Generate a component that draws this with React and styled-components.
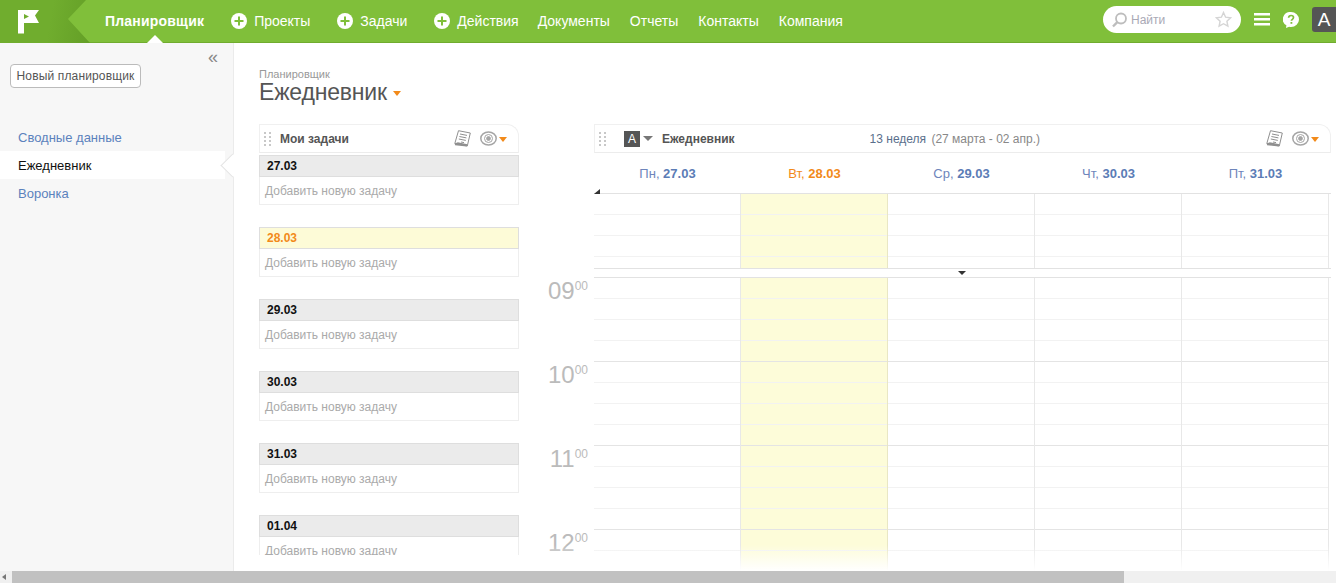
import React from "react";
import styled, { createGlobalStyle } from "styled-components";

const navItems = [
  { label: "Проекты", plus: true, after: 7 },
  { label: "Задачи", plus: true, after: 7 },
  { label: "Действия", plus: true, after: -1 },
  { label: "Документы" },
  { label: "Отчеты" },
  { label: "Контакты" },
  { label: "Компания" },
];

const sideItems = [
  { label: "Сводные данные" },
  { label: "Ежедневник", active: true },
  { label: "Воронка" },
];

const taskDays = [
  { date: "27.03" },
  { date: "28.03", today: true },
  { date: "29.03" },
  { date: "30.03" },
  { date: "31.03" },
  { date: "01.04" },
];

const weekDays = [
  { name: "Пн", date: "27.03" },
  { name: "Вт", date: "28.03", today: true },
  { name: "Ср", date: "29.03" },
  { name: "Чт", date: "30.03" },
  { name: "Пт", date: "31.03" },
];

const hours = ["09", "10", "11", "12"];

const LogoIcon = () => (
  <svg width="24" height="26" viewBox="0 0 24 26">
    <path
      fill="#fff"
      fillRule="evenodd"
      d="M0 2h21l-4 5.500 4 7.500H6v10.500H0zM6 6v5l5-2.500z"
    />
  </svg>
);

const PlusIcon = () => (
  <svg width="16" height="16" viewBox="0 0 16 16">
    <circle cx="8" cy="8" r="8" fill="#fff" />
    <path d="M7 3.500h2V7h3.500v2H9v3.500H7V9H3.500V7H7z" fill="#80bf3a" />
  </svg>
);

const SearchIcon = () => (
  <svg width="15" height="16" viewBox="0 0 15 16" fill="none" stroke="#bdbdbd">
    <circle cx="9" cy="6.500" r="5" strokeWidth="1.800" />
    <path d="M5.300 10.200 1 14.500" strokeWidth="2.400" />
  </svg>
);

const StarIcon = () => (
  <svg width="17" height="17" viewBox="0 0 17 17">
    <path
      d="M8.500 1.500l2.100 4.700 5 .6-3.700 3.400 1 5-4.400-2.500-4.400 2.500 1-5L1.400 6.800l5-.6z"
      fill="none"
      stroke="#d5d5d5"
      strokeWidth="1.400"
    />
  </svg>
);

const MenuIcon = () => (
  <svg width="16" height="13" viewBox="0 0 16 13">
    <path d="M0 0h16v2.500H0zM0 5h16v2.500H0zM0 10h16v2.500H0z" fill="#fff" />
  </svg>
);

const HelpIcon = () => (
  <svg width="16" height="16" viewBox="0 0 16 16">
    <path
      d="M8 0a8 7.500 0 0 1 0 15c-.7 0-1.300-.1-1.900-.2L3 16l.4-2.700A7.500 7.200 0 0 1 8 0z"
      fill="#fff"
    />
    <path
      d="M5.600 5.800C5.700 4.300 6.700 3.500 8.100 3.500c1.400 0 2.400.8 2.400 2 0 1.900-2.100 1.700-2.100 3.300"
      fill="none"
      stroke="#80bf3a"
      strokeWidth="1.700"
    />
    <rect x="7.500" y="10" width="1.800" height="1.800" fill="#80bf3a" />
  </svg>
);

const GripIcon = () => (
  <svg width="7" height="14" viewBox="0 0 7 14" fill="#c8c8c8">
    {[0, 4, 8, 12].map((y) => (
      <React.Fragment key={y}>
        <rect x="0" y={y} width="2" height="2" />
        <rect x="5" y={y} width="2" height="2" />
      </React.Fragment>
    ))}
  </svg>
);

const NoteIcon = () => (
  <svg width="17" height="17" viewBox="0 0 17 17">
    <path d="M4.500.7 16.300 3l-3 13L.8 13.500z" fill="#fff" stroke="#8f8f8f" />
    <path
      d="M6 4l7 1.400M5.400 6.500l7 1.400M4.800 9l7 1.400M7 12l3 .6"
      stroke="#8f8f8f"
    />
    <path d="M.8 13.500l3-1.300 9.500 2-.6 2.300L1 15.200z" fill="#8f8f8f" />
  </svg>
);

const EyeIcon = () => (
  <svg width="17" height="15" viewBox="0 0 17 15" fill="none" stroke="#a5a5a5">
    <ellipse cx="8.500" cy="7.500" rx="7.700" ry="6.500" strokeWidth="1.500" />
    <circle cx="8.500" cy="7.500" r="4" />
    <circle cx="8.500" cy="7.500" r="1.900" fill="#a5a5a5" />
  </svg>
);

const ViewControls = () => (
  <PaneTools>
    <NoteIcon />
    <EyeGroup>
      <EyeIcon />
      <Caret />
    </EyeGroup>
  </PaneTools>
);

const Slots = ({ short }) => (
  <>
    <Slot />
    <Slot />
    <Slot />
    <Slot $short={short} />
  </>
);

const App = () => {
  return (
    <Page>
      <GlobalStyle />
      <TopBar>
        <LogoBox>
          <LogoIcon />
        </LogoBox>
        <Nav>
          <ActiveLink>Планировщик</ActiveLink>
          {navItems.map((item) => (
            <NavLink key={item.label} $after={item.after}>
              {item.plus && <PlusIcon />}
              {item.label}
            </NavLink>
          ))}
        </Nav>
        <TopTools>
          <SearchBox>
            <SearchIcon />
            <SearchText>Найти</SearchText>
            <StarIcon />
          </SearchBox>
          <MenuIcon />
          <HelpIcon />
          <Avatar>A</Avatar>
        </TopTools>
      </TopBar>

      <Body>
        <Sidebar>
          <CollapseRow>«</CollapseRow>
          <NewButton>Новый планировщик</NewButton>
          <SideNav>
            {sideItems.map((item) => (
              <SideItem key={item.label} $active={item.active}>
                {item.label}
              </SideItem>
            ))}
          </SideNav>
        </Sidebar>

        <Main>
          <PageHead>
            <Crumb>Планировщик</Crumb>
            <TitleRow>
              <Title>Ежедневник</Title>
              <Caret />
            </TitleRow>
          </PageHead>

          <Columns>
            <TaskColumn>
              <PaneHeader>
                <GripIcon />
                <PaneTitle>Мои задачи</PaneTitle>
                <ViewControls />
              </PaneHeader>
              <TaskList>
                {taskDays.map((day) => (
                  <TaskDay key={day.date}>
                    <TaskDate $today={day.today}>{day.date}</TaskDate>
                    <TaskInput>Добавить новую задачу</TaskInput>
                  </TaskDay>
                ))}
              </TaskList>
            </TaskColumn>

            <CalendarColumn>
              <CalendarHeader>
                <GripIcon />
                <CalBadge>A</CalBadge>
                <GreyCaret />
                <CalTitle>Ежедневник</CalTitle>
                <WeekInfo>
                  13 неделя <WeekRange>(27 марта - 02 апр.)</WeekRange>
                </WeekInfo>
                <ViewControls />
              </CalendarHeader>

              <DaysRow>
                {weekDays.map((day) => (
                  <DayHead key={day.date} $today={day.today}>
                    {day.name}, <b>{day.date}</b>
                  </DayHead>
                ))}
              </DaysRow>

              <AllDayGrid>
                <CornerMark />
                {weekDays.map((day) => (
                  <DayCell key={day.date} $today={day.today}>
                    <Slots short />
                  </DayCell>
                ))}
              </AllDayGrid>
              <Splitter>
                <SplitterMark />
              </Splitter>

              {hours.map((hour) => (
                <HourRow key={hour}>
                  <HourLabel>
                    {hour}
                    <sup>00</sup>
                  </HourLabel>
                  <HourGrid>
                    {weekDays.map((day) => (
                      <DayCell key={day.date} $today={day.today}>
                        <Slots />
                      </DayCell>
                    ))}
                  </HourGrid>
                </HourRow>
              ))}
              <BottomFade />
            </CalendarColumn>
          </Columns>
        </Main>
      </Body>

      <ScrollBar>
        <ScrollArrow />
        <ScrollThumb />
      </ScrollBar>
    </Page>
  );
};

export default App;

const GlobalStyle = createGlobalStyle`
  html, body {
    margin: 0;
    padding: 0;
    overflow: hidden;
    background: #fff;
    font-family: "Liberation Sans", Arial, sans-serif;
  }
`;

const Page = styled.div`
  width: 1336px;
  height: 583px;
  display: flex;
  flex-direction: column;
  overflow: hidden;
`;

const TopBar = styled.header`
  height: 43px;
  flex: none;
  display: flex;
  background: #80bf3a;
  border-bottom: 1px solid #70ac2e;
  box-sizing: border-box;
`;

const LogoBox = styled.div`
  width: 90px;
  height: 43px;
  flex: none;
  padding: 8px 0 0 18px;
  box-sizing: border-box;
  background: linear-gradient(100deg, #70ad2e 55%, #649f27);
  clip-path: polygon(0 0, 86px 0, 68px 19px, 90px 43px, 0 43px);
`;

const Nav = styled.nav`
  display: flex;
  align-items: center;
  margin-left: 15px;
  height: 42px;
  gap: 20px;
  font-size: 14px;
  color: #fff;
`;

const ActiveLink = styled.a`
  position: relative;
  font-weight: bold;
  letter-spacing: 0.2px;
  line-height: 42px;
  margin-right: 7px;

  &::after {
    content: "";
    position: absolute;
    left: 42px;
    bottom: -1px;
    border: 8px solid transparent;
    border-top: 0;
    border-bottom-color: #fff;
  }
`;

const NavLink = styled.a`
  display: flex;
  align-items: center;
  gap: 7px;
  margin-right: ${(props) => props.$after || 0}px;
`;

const TopTools = styled.div`
  margin-left: auto;
  display: flex;
  align-items: center;
  height: 39px;
  gap: 13px;
`;

const SearchBox = styled.div`
  width: 138px;
  height: 27px;
  padding: 0 9px;
  box-sizing: border-box;
  background: #fff;
  border-radius: 14px;
  display: flex;
  align-items: center;
  gap: 4px;
`;

const SearchText = styled.span`
  flex: 1;
  font-size: 12px;
  color: #a9a9b5;
`;

const Avatar = styled.div`
  width: 24px;
  height: 25px;
  border-radius: 3px 0 0 3px;
  background: #555;
  color: #fff;
  font-size: 19px;
  line-height: 25px;
  text-align: center;
`;

const Body = styled.div`
  flex: 1;
  min-height: 0;
  display: flex;
  overflow: hidden;
`;

const Sidebar = styled.aside`
  width: 234px;
  flex: none;
  box-sizing: border-box;
  background: #f7f7f7;
  border-right: 1px solid #ebebeb;
`;

const CollapseRow = styled.div`
  height: 21px;
  padding-right: 15px;
  text-align: right;
  font-size: 18px;
  line-height: 28px;
  color: #888;
`;

const NewButton = styled.button`
  display: block;
  width: 131px;
  height: 24px;
  margin-left: 10px;
  padding: 0;
  background: #fff;
  border: 1px solid #bbb;
  border-radius: 4px;
  font-family: inherit;
  font-size: 12px;
  letter-spacing: 0.15px;
  color: #555;
`;

const SideNav = styled.div`
  margin-top: 35px;
`;

const SideItem = styled.div`
  position: relative;
  height: 28px;
  width: 225px;
  padding-left: 18px;
  box-sizing: border-box;
  font-size: 13px;
  line-height: 30px;
  color: ${(props) => (props.$active ? "#111" : "#5b82bd")};
  background: ${(props) => (props.$active ? "#fff" : "transparent")};

  ${(props) =>
    props.$active &&
    `
    &::after {
      content: "";
      position: absolute;
      left: 224px;
      top: 5.500px;
      width: 17px;
      height: 17px;
      box-sizing: border-box;
      background: #fff;
      border-left: 1px solid #e4e4e4;
      border-bottom: 1px solid #e4e4e4;
      transform: rotate(45deg);
    }
  `}
`;

const Main = styled.main`
  flex: 1;
  min-width: 0;
  padding-left: 25px;
`;

const PageHead = styled.div`
  height: 81px;
  box-sizing: border-box;
  padding-top: 25px;
`;

const Crumb = styled.div`
  font-size: 11px;
  line-height: 12px;
  color: #999;
`;

const TitleRow = styled.div`
  display: flex;
  align-items: center;
  gap: 6px;
`;

const Title = styled.h1`
  margin: 0;
  font-size: 23px;
  letter-spacing: -0.2px;
  line-height: 25px;
  font-weight: normal;
  color: #555;
`;

const Caret = styled.span`
  display: block;
  width: 0;
  height: 0;
  margin-top: 2px;
  border: 4.500px solid transparent;
  border-top: 5px solid #f28a1a;
  border-bottom: 0;
`;

const GreyCaret = styled(Caret)`
  border-top-color: #777;
  border-left-width: 5px;
  border-right-width: 5px;
  margin: 0 0 0 3px;
`;

const Columns = styled.div`
  display: flex;
`;

const TaskColumn = styled.section`
  width: 260px;
  flex: none;
`;

const PaneHeader = styled.div`
  height: 29px;
  box-sizing: border-box;
  display: flex;
  align-items: center;
  padding: 0 11px 0 4px;
  background: #fff;
  border: 1px solid #f0f0f0;
  border-bottom-color: #ececec;
  border-top-right-radius: 12px;
`;

const PaneTitle = styled.span`
  margin-left: 9px;
  font-size: 12px;
  font-weight: bold;
  color: #555;
`;

const PaneTools = styled.div`
  margin-left: auto;
  display: flex;
  align-items: center;
  gap: 9px;
`;

const EyeGroup = styled.div`
  display: flex;
  align-items: center;
  gap: 2px;
`;

const TaskList = styled.div`
  height: 400px;
  margin-top: 2px;
  overflow: hidden;
`;

const TaskDay = styled.div`
  margin-bottom: 22px;
`;

const TaskDate = styled.div`
  height: 22px;
  box-sizing: border-box;
  padding-left: 7px;
  font-size: 12px;
  font-weight: bold;
  line-height: 20px;
  color: ${(props) => (props.$today ? "#f28a1a" : "#111")};
  background: ${(props) => (props.$today ? "#fdfbd7" : "#ebebeb")};
  border: 1px solid #dedede;
`;

const TaskInput = styled.div`
  height: 28px;
  box-sizing: border-box;
  padding-left: 5px;
  font-size: 12px;
  line-height: 28px;
  color: #aaa;
  border: 1px solid #eee;
  border-top: 0;
`;

const CalendarColumn = styled.section`
  position: relative;
  width: 785px;
  margin-left: 27px;
  flex: none;
`;

const CalendarHeader = styled(PaneHeader)`
  margin-left: 48px;
`;

const CalBadge = styled.span`
  width: 16px;
  height: 16px;
  margin-left: 18px;
  background: #555;
  color: #fff;
  font-size: 12px;
  line-height: 16px;
  text-align: center;
`;

const CalTitle = styled(PaneTitle)`
  margin-left: 9px;
`;

const WeekInfo = styled.span`
  margin-left: 135px;
  font-size: 12px;
  color: #5a6f8c;
`;

const WeekRange = styled.span`
  margin-left: 2px;
  color: #888;
`;

const DaysRow = styled.div`
  height: 40px;
  margin-left: 48px;
  display: grid;
  grid-template-columns: repeat(5, 147px);
`;

const DayHead = styled.div`
  text-align: center;
  font-size: 13px;
  line-height: 41px;
  color: ${(props) => (props.$today ? "#f28a1a" : "#6e85bb")};

  b {
    color: ${(props) => (props.$today ? "#f28a1a" : "#5b7cb6")};
  }
`;

const AllDayGrid = styled.div`
  position: relative;
  margin-left: 48px;
  display: grid;
  grid-template-columns: repeat(5, 147px);
  border-top: 1px solid #e2e2e2;
  border-bottom: 1px solid #e2e2e2;
`;

const CornerMark = styled.span`
  position: absolute;
  left: 0;
  top: -5px;
  border-bottom: 5px solid #333;
  border-left: 6px solid transparent;
`;

const DayCell = styled.div`
  box-sizing: border-box;
  border-right: 1px solid ${(props) => (props.$today ? "#e9e7c4" : "#e8e8e8")};
  background: ${(props) => (props.$today ? "#fdfcd9" : "transparent")};
`;

const Slot = styled.div`
  height: ${(props) => (props.$short ? "11px" : "21px")};
  box-sizing: border-box;
  border-bottom: 1px solid #f2f2f2;

  &:last-child {
    border-bottom: ${(props) => (props.$short ? "0" : "1px solid #e4e4e4")};
  }
`;

const Splitter = styled.div`
  position: relative;
  height: 8px;
  margin-left: 48px;
  border-bottom: 1px solid #e2e2e2;
`;

const SplitterMark = styled.span`
  position: absolute;
  left: 364px;
  top: 2px;
  border: 4px solid transparent;
  border-top: 4px solid #333;
  border-bottom: 0;
`;

const HourRow = styled.div`
  display: flex;
`;

const HourLabel = styled.div`
  width: 48px;
  flex: none;
  box-sizing: border-box;
  padding: 1px 6px 0 0;
  text-align: right;
  font-size: 24px;
  line-height: 24px;
  color: #bbb;

  sup {
    font-size: 12px;
    line-height: 0;
    vertical-align: 9px;
  }
`;

const HourGrid = styled.div`
  display: grid;
  grid-template-columns: repeat(5, 147px);
`;

const BottomFade = styled.div`
  position: absolute;
  left: 0;
  right: 0;
  top: 421px;
  height: 26px;
  background: linear-gradient(rgba(255, 255, 255, 0), #fff);
`;

const ScrollBar = styled.div`
  height: 12px;
  flex: none;
  display: flex;
  align-items: center;
  background: #f0f0f0;
`;

const ScrollArrow = styled.span`
  width: 0;
  height: 0;
  margin: 0 6px 0 2px;
  border: 3px solid transparent;
  border-right: 4px solid #777;
  border-left: 0;
`;

const ScrollThumb = styled.div`
  width: 1112px;
  height: 12px;
  background: #c1c1c1;
`;
